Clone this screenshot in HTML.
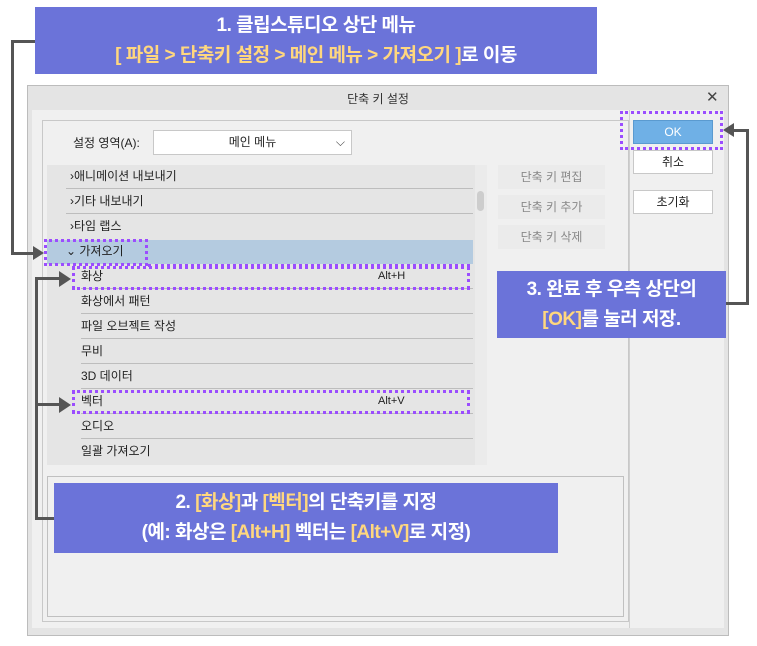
<!DOCTYPE html>
<html><head><meta charset="utf-8"><style>
*{margin:0;padding:0;box-sizing:border-box}
body{width:757px;height:646px;background:#fff;position:relative;overflow:hidden;font-family:"Liberation Sans","Noto Sans CJK KR",sans-serif;}
.a{position:absolute}
.ban{background:#6b73d9;color:#fff;font-weight:bold;text-align:center;font-size:19px;line-height:30px;letter-spacing:-0.5px}
.y{color:#ffd77e}
.row{position:absolute;left:47px;width:426px;height:25px;font-size:12px;color:#222;line-height:25px;border-bottom:1px solid #bdbdbd}
.btn2{position:absolute;left:498px;width:107px;height:24px;background:#ebebeb;color:#888;font-size:12px;text-align:center;line-height:24px}
.wb{position:absolute;left:633px;width:80px;height:24px;background:#fff;border:1px solid #c8c8c8;font-size:12px;text-align:center;line-height:22px;color:#222}
.dash{position:absolute;border:3px dotted #9b4dff}
.ln{position:absolute;background:#555}
</style></head><body>
<!-- dialog -->
<div class="a" style="left:27px;top:85px;width:702px;height:551px;background:#e4e4e4;border:1px solid #bcbcbc"></div>
<div class="a" style="left:27px;top:85px;width:702px;height:25px;text-align:center;font-size:12px;line-height:28px;color:#333">단축 키 설정</div>
<div class="a" style="left:706px;top:88px;font-size:15px;color:#444">✕</div>
<div class="a" style="left:32px;top:110px;width:692px;height:518px;background:#f0f0f0"></div>
<div class="a" style="left:42px;top:120px;width:587px;height:502px;border:1px solid #c8c8c8"></div>
<div class="a" style="left:73px;top:134px;font-size:12px;color:#222">설정 영역(A):</div>
<div class="a" style="left:153px;top:130px;width:199px;height:25px;background:#fff;border:1px solid #c8c8c8;font-size:12px;text-align:center;line-height:23px;color:#222">메인 메뉴<span style="position:absolute;right:6px;top:0;color:#444">⌵</span></div>
<div class="a" style="left:47px;top:165px;width:440px;height:300px;background:#e5e5e5"></div>
<div class="a" style="left:475px;top:165px;width:12px;height:300px;background:#ebebeb"></div>
<div class="a" style="left:477px;top:191px;width:7px;height:20px;background:#cdcdcd;border-radius:4px"></div>
<div class="row" style="top:164px;left:66px;width:407px;padding-left:4px">›애니메이션 내보내기</div>
<div class="row" style="top:189px;left:66px;width:407px;padding-left:4px">›기타 내보내기</div>
<div class="row" style="top:214px;left:66px;width:407px;padding-left:4px;border:0">›타임 랩스</div>
<div class="a" style="left:47px;top:240px;width:426px;height:24px;background:#b4cbe0"></div>
<div class="a" style="left:66px;top:239px;font-size:12px;line-height:25px;color:#222">⌄ 가져오기</div>
<div class="row" style="top:264px;left:81px;width:392px">화상<span style="position:absolute;left:297px;font-size:11px">Alt+H</span></div>
<div class="row" style="top:289px;left:81px;width:392px">화상에서 패턴</div>
<div class="row" style="top:314px;left:81px;width:392px">파일 오브젝트 작성</div>
<div class="row" style="top:339px;left:81px;width:392px">무비</div>
<div class="row" style="top:364px;left:81px;width:392px">3D 데이터</div>
<div class="row" style="top:389px;left:81px;width:392px">벡터<span style="position:absolute;left:297px;font-size:11px">Alt+V</span></div>
<div class="row" style="top:414px;left:81px;width:392px">오디오</div>
<div class="row" style="top:439px;left:81px;width:392px;border:0">일괄 가져오기</div>
<div class="btn2" style="top:165px">단축 키 편집</div>
<div class="btn2" style="top:195px">단축 키 추가</div>
<div class="btn2" style="top:225px">단축 키 삭제</div>
<div class="a" style="left:47px;top:476px;width:577px;height:141px;border:1px solid #c0c0c0"></div>
<div class="a" style="left:629px;top:110px;width:1px;height:518px;background:#d0d0d0"></div>
<div class="wb" style="top:120px;background:#6fb0e6;border-color:#5a9ad0;color:#fff">OK</div>
<div class="wb" style="top:150px">취소</div>
<div class="wb" style="top:190px">초기화</div>
<!-- dashed -->
<div class="dash" style="left:620px;top:111px;width:103px;height:39px"></div>
<div class="dash" style="left:44px;top:239px;width:104px;height:27px"></div>
<div class="a" style="left:148px;top:264px;width:322px;border-top:3px dotted #9b4dff"></div>
<div class="dash" style="left:72px;top:266px;width:398px;height:24px"></div>
<div class="dash" style="left:72px;top:390px;width:398px;height:24px"></div>
<!-- connectors -->
<div class="ln" style="left:11px;top:40px;width:25px;height:3px"></div>
<div class="ln" style="left:11px;top:40px;width:3px;height:215px"></div>
<div class="ln" style="left:11px;top:252px;width:24px;height:3px"></div>
<div class="a" style="left:33px;top:246px;width:0;height:0;border-left:11px solid #555;border-top:7px solid transparent;border-bottom:7px solid transparent"></div>
<div class="ln" style="left:719px;top:302px;width:30px;height:3px"></div>
<div class="ln" style="left:746px;top:129px;width:3px;height:176px"></div>
<div class="ln" style="left:733px;top:129px;width:16px;height:3px"></div>
<div class="a" style="left:723px;top:123px;width:0;height:0;border-right:11px solid #555;border-top:7px solid transparent;border-bottom:7px solid transparent"></div>
<div class="ln" style="left:35px;top:517px;width:20px;height:3px"></div>
<div class="ln" style="left:35px;top:277px;width:3px;height:243px"></div>
<div class="ln" style="left:35px;top:277px;width:26px;height:3px"></div>
<div class="a" style="left:59px;top:271px;border-left:12px solid #555;border-top:8px solid transparent;border-bottom:8px solid transparent"></div>
<div class="ln" style="left:35px;top:403px;width:26px;height:3px"></div>
<div class="a" style="left:59px;top:397px;border-left:12px solid #555;border-top:8px solid transparent;border-bottom:8px solid transparent"></div>
<!-- banners -->
<div class="a ban" style="left:35px;top:7px;width:562px;height:67px;padding-top:4px">1. 클립스튜디오 상단 메뉴<br><span class="y">[ 파일 &gt; 단축키 설정 &gt; 메인 메뉴 &gt; 가져오기 ]</span>로 이동</div>
<div class="a ban" style="left:497px;top:271px;width:229px;height:67px;padding-top:4px">3. 완료 후 우측 상단의<br><span class="y">[OK]</span>를 눌러 저장.</div>
<div class="a ban" style="left:54px;top:483px;width:504px;height:70px;padding-top:5px">2. <span class="y">[화상]</span>과 <span class="y">[벡터]</span>의 단축키를 지정<br>(예: 화상은 <span class="y">[Alt+H]</span> 벡터는 <span class="y">[Alt+V]</span>로 지정)</div>
</body></html>
